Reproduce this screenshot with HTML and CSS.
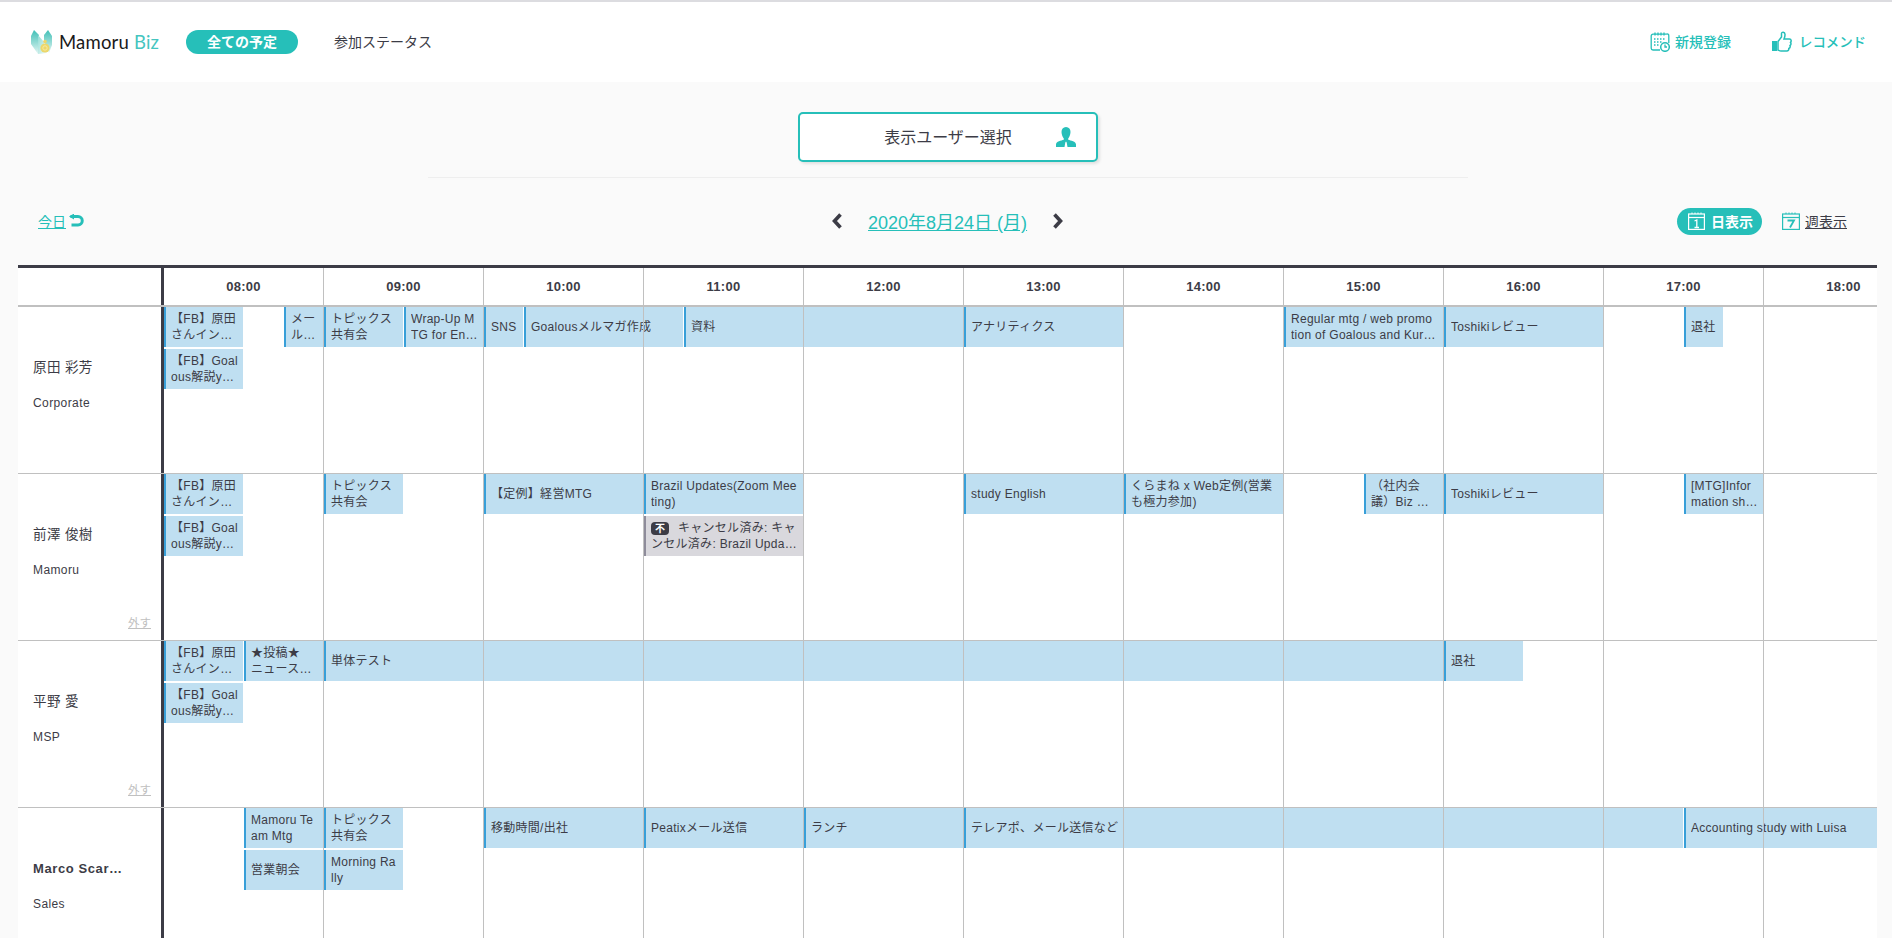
FILE: index.html
```html
<!DOCTYPE html>
<html lang="ja">
<head>
<meta charset="utf-8">
<title>Mamoru Biz</title>
<link rel="stylesheet" href="styles.css">
</head>
<body>
<header class="topbar">
  <div class="brand">
    <svg class="logo" viewBox="0 0 24 26" width="24" height="26">
      <defs>
        <linearGradient id="lg" x1="0" y1="0" x2="0" y2="1"><stop offset="0" stop-color="#3fbfb6"/><stop offset="1" stop-color="#e4f6f3"/></linearGradient>
        <linearGradient id="lh" x1="0" y1="0" x2="1" y2="1"><stop offset="0" stop-color="#8fdcd5"/><stop offset="1" stop-color="#f4fbf9"/></linearGradient>
      </defs>
      <polygon points="4,1 9,6 9,15 8,25 1,15 1,7" fill="url(#lg)"/>
      <polygon points="18,1 22,7 22,16 19,24 14,12 14,6" fill="url(#lg)"/>
      <polygon points="8,6 14,13 17,24 8,25" fill="url(#lh)"/>
      <circle cx="15" cy="19" r="4.6" fill="#ecd76a"/>
      <circle cx="15" cy="19" r="2.200" fill="none" stroke="#f8eeb0" stroke-width=".8"/>
      <circle cx="15" cy="12.500" r="1.800" fill="#ecd76a"/>
    </svg>
    <span class="brand-name">Mamoru <span class="brand-biz">Biz</span></span>
  </div>
  <nav class="nav">
    <a class="nav-pill">全ての予定</a>
    <a class="nav-link">参加ステータス</a>
  </nav>
  <div class="actions">
    <a class="action action-new">
      <svg viewBox="0 0 20 20" width="20" height="20" fill="none" stroke="#26bfb9" stroke-width="1.300">
        <path d="M10 18H3a1.800 1.800 0 0 1-1.800-1.800V4A1.800 1.800 0 0 1 3 2.200h13A1.800 1.800 0 0 1 18.800 4v7"/>
        <path d="M5 .5v3M8 .5v3M11 .5v3M14 .5v3"/>
        <path d="M4 7h1.500M7 7h1.500M10 7h1.500M13 7h1.500M4 10h1.500M7 10h1.500M10 10h1.500M4 13h1.500M7 13h1.500" stroke-width="1.400"/>
        <circle cx="15" cy="15" r="4.300" fill="#fff" stroke-width="1.500"/>
        <path d="M15 12.500V15h2"/>
      </svg>
      <span class="lift">新規登録</span>
    </a>
    <a class="action action-rec">
      <svg viewBox="0 0 20 22" width="20" height="22">
        <rect x="0" y="10" width="5" height="10" fill="#26bfb9"/>
        <path d="M6 10.500 9.500 6V2.500c0-1.800 3.300-1.800 3.500.8.100 1.700-.6 3.700-1 4.700h5.500c2 0 2 2.500 1 3.500.8 1 .6 2.500-.5 3 .4 1.200 0 2.500-1.200 3 .2 1.500-.6 2.500-2 2.500H9c-1.300 0-2-.6-3-1z" fill="none" stroke="#26bfb9" stroke-width="1.500"/>
      </svg>
      <span class="lift">レコメンド</span>
    </a>
  </div>
</header>

<main class="page">
  <section class="picker">
    <button class="picker-btn">
      表示ユーザー選択
      <svg class="picker-icon" viewBox="0 0 20 20" width="20" height="20">
        <path fill="#26bfb9" d="M10 0c3 0 4.500 2.200 4.500 5S13 10.500 12.200 11.500v1.300c2.500.8 7.800 1.700 7.800 4.700V20h-8.500L10.700 15.500 10 14.500 9.300 15.500 8.500 20H0v-2.500c0-3 5.300-3.900 7.800-4.700v-1.300C7 10.500 5.500 7.800 5.500 5S7 0 10 0z"/>
      </svg>
    </button>
  </section>
  <hr class="rule">

  <section class="toolbar">
    <div class="today">
      <a class="today-link">今日</a>
      <svg viewBox="0 0 15 14" width="15" height="14" fill="none" stroke="#26bfb9" stroke-width="3">
        <path d="M1.500 2.500H9a4 4 0 0 1 0 8.500H2.500"/>
        <path d="M0 2.500 5 -.5v6z" fill="#26bfb9" stroke="none"/>
      </svg>
    </div>
    <div class="date-nav">
      <svg viewBox="0 0 10 16" width="10" height="16" fill="none" stroke="#3c3c46" stroke-width="3.600"><path d="M8.500 1.500 2.500 8l6 6.500"/></svg>
      <a class="date">2020年8月24日 (月)</a>
      <svg viewBox="0 0 10 16" width="10" height="16" fill="none" stroke="#3c3c46" stroke-width="3.600"><path d="M1.500 1.500 7.500 8l-6 6.500"/></svg>
    </div>
    <div class="views">
      <a class="view-pill">
        <svg viewBox="0 0 17 18" width="17" height="18" fill="none" stroke="#fff" stroke-width="1.200">
          <rect x=".6" y="2" width="15.800" height="15.400"/><path d="M.6 5.500h15.800"/><path d="M4 .5v1.500M7 .5v1.500M10 .5v1.500M13 .5v1.500" stroke-width="1"/>
          <path d="M6.500 9 8.800 8v7.500M6.500 15.500h4.500" stroke-width="1.300"/>
        </svg>
        日表示
      </a>
      <a class="view-link">
        <svg viewBox="0 0 18 18" width="18" height="18" fill="none" stroke="#26bfb9" stroke-width="1.200">
          <rect x=".6" y="2" width="16.800" height="15.400"/><path d="M.6 5.500h16.800"/><path d="M4 .5v1.500M7 .5v1.500M10 .5v1.500M13 .5v1.500" stroke-width="1"/>
          <path d="M5.500 8.500H12L8 15.500" stroke-width="1.800"/>
        </svg>
        <span class="view-text">週表示</span>
      </a>
    </div>
  </section>

  <section class="schedule">
    <div class="head-row">
      <div class="name-head"></div>
      <div class="hours">
        <div class="hour">08:00</div><div class="hour">09:00</div><div class="hour">10:00</div><div class="hour">11:00</div><div class="hour">12:00</div><div class="hour">13:00</div><div class="hour">14:00</div><div class="hour">15:00</div><div class="hour">16:00</div><div class="hour">17:00</div><div class="hour">18:00</div>
      </div>
    </div>

    <div class="row">
      <div class="person">
        <div class="name">原田 彩芳</div>
        <div class="dept">Corporate</div>
      </div>
      <div class="lanes">
        <div class="ev l1" style="grid-column:1/3"><span class="t">【FB】原田さんインタビュー</span></div>
        <div class="ev l1" style="grid-column:4/5"><span class="t">メール送信作業</span></div>
        <div class="ev l1" style="grid-column:5/7"><span class="t">トピックス共有会</span></div>
        <div class="ev l1" style="grid-column:7/9"><span class="t">Wrap-Up MTG for Engineers</span></div>
        <div class="ev l1" style="grid-column:9/10"><span class="t">SNS</span></div>
        <div class="ev l1" style="grid-column:10/14"><span class="t">Goalousメルマガ作成</span></div>
        <div class="ev l1" style="grid-column:14/21"><span class="t">資料</span></div>
        <div class="ev l1" style="grid-column:21/25"><span class="t">アナリティクス</span></div>
        <div class="ev l1" style="grid-column:29/33"><span class="t">Regular mtg / web promo<br>tion of Goalous and Kuramane</span></div>
        <div class="ev l1" style="grid-column:33/37"><span class="t">Toshikiレビュー</span></div>
        <div class="ev l1" style="grid-column:39/40"><span class="t">退社</span></div>
        <div class="ev l2" style="grid-column:1/3"><span class="t">【FB】Goalous解説yのインタビュー</span></div>
      </div>
    </div>

    <div class="row">
      <div class="person">
        <div class="name">前澤 俊樹</div>
        <div class="dept">Mamoru</div>
        <a class="remove">外す</a>
      </div>
      <div class="lanes">
        <div class="ev l1" style="grid-column:1/3"><span class="t">【FB】原田さんインタビュー</span></div>
        <div class="ev l1" style="grid-column:5/7"><span class="t">トピックス共有会</span></div>
        <div class="ev l1" style="grid-column:9/13"><span class="t">【定例】経営MTG</span></div>
        <div class="ev l1" style="grid-column:13/17"><span class="t">Brazil Updates(Zoom Meeting)</span></div>
        <div class="ev l1" style="grid-column:21/25"><span class="t">study English</span></div>
        <div class="ev l1" style="grid-column:25/29"><span class="t">くらまね x Web定例(営業も極力参加)</span></div>
        <div class="ev l1" style="grid-column:31/33"><span class="t">（社内会議）Biz Meeting</span></div>
        <div class="ev l1" style="grid-column:33/37"><span class="t">Toshikiレビュー</span></div>
        <div class="ev l1" style="grid-column:39/41"><span class="t">[MTG]Information sharing</span></div>
        <div class="ev l2" style="grid-column:1/3"><span class="t">【FB】Goalous解説yのインタビュー</span></div>
        <div class="ev l2 ev-off" style="grid-column:13/17"><span class="t"><b class="badge">不</b>キャンセル済み: キャンセル済み: Brazil Updates(Zoom Meeting)</span></div>
      </div>
    </div>

    <div class="row">
      <div class="person">
        <div class="name">平野 愛</div>
        <div class="dept">MSP</div>
        <a class="remove">外す</a>
      </div>
      <div class="lanes">
        <div class="ev l1" style="grid-column:1/3"><span class="t">【FB】原田さんインタビュー</span></div>
        <div class="ev l1" style="grid-column:3/5"><span class="t">★投稿★<br>ニュース配信作業</span></div>
        <div class="ev l1" style="grid-column:5/33"><span class="t">単体テスト</span></div>
        <div class="ev l1" style="grid-column:33/35"><span class="t">退社</span></div>
        <div class="ev l2" style="grid-column:1/3"><span class="t">【FB】Goalous解説yのインタビュー</span></div>
      </div>
    </div>

    <div class="row">
      <div class="person">
        <div class="name name-strong">Marco Scarpellini</div>
        <div class="dept">Sales</div>
      </div>
      <div class="lanes">
        <div class="ev l1" style="grid-column:3/5"><span class="t">Mamoru Team Mtg</span></div>
        <div class="ev l1" style="grid-column:5/7"><span class="t">トピックス共有会</span></div>
        <div class="ev l1" style="grid-column:9/13"><span class="t">移動時間/出社</span></div>
        <div class="ev l1" style="grid-column:13/17"><span class="t">Peatixメール送信</span></div>
        <div class="ev l1" style="grid-column:17/21"><span class="t">ランチ</span></div>
        <div class="ev l1" style="grid-column:21/39"><span class="t">テレアポ、メール送信など</span></div>
        <div class="ev l1" style="grid-column:39/45"><span class="t">Accounting study with Luisa</span></div>
        <div class="ev l2" style="grid-column:3/5"><span class="t">営業朝会</span></div>
        <div class="ev l2" style="grid-column:5/7"><span class="t">Morning Rally</span></div>
      </div>
    </div>
  </section>
</main>
</body>
</html>
```

FILE: styles.css
```css
* { box-sizing: border-box; }
html, body { margin: 0; height: 938px; overflow: hidden; }
body {
  background: #fafafa;
  color: #3c3c46;
  font-family: "Liberation Sans", "Noto Sans CJK JP", sans-serif;
  font-size: 14px;
}
a { cursor: pointer; }

.topbar {
  height: 82px;
  border-top: 2px solid #dcdce0;
  background: #fff;
  display: flex;
  align-items: center;
  padding: 0 26px 0 30px;
}
.brand { display: flex; align-items: center; gap: 5px; width: 156px; }
.logo { flex: none; }
.brand-name {
  font-family: "Lato", sans-serif;
  font-size: 18.5px;
  color: #1a1a1a;
  white-space: nowrap;
  letter-spacing: .2px;
}
.brand-biz { color: #45c5c0; }
.nav { display: flex; align-items: center; gap: 36px; }
.nav-pill {
  width: 112px;
  height: 24px;
  border-radius: 12px;
  background: #26bfb9;
  color: #fff;
  font-weight: 700;
  font-size: 14px;
  display: flex;
  align-items: center;
  justify-content: center;
  padding-bottom: 2px;
}
.nav-link { font-size: 14px; color: #3c3c46; padding-bottom: 2px; }
.actions { margin-left: auto; display: flex; align-items: center; gap: 41px; }
.action {
  display: flex;
  align-items: center;
  gap: 5px;
  color: #26bfb9;
  font-size: 14px;
  font-weight: 500;
}
.lift { padding-bottom: 2px; }
.action-rec { gap: 7px; font-size: 13.4px; }

.page { display: block; }
.picker { display: flex; justify-content: center; padding: 30px 0 0 4px; }
.picker-btn {
  position: relative;
  width: 300px;
  height: 50px;
  background: #fff;
  border: 2px solid #26bfb9;
  border-radius: 5px;
  box-shadow: 2px 2px 3px rgba(0, 0, 0, .1);
  font: inherit;
  font-size: 16px;
  color: #3c3c46;
  padding: 0 0 3px 0;
}
.picker-icon { position: absolute; right: 20px; top: 13px; }
.rule { width: 1040px; height: 1px; border: 0; background: #eeeeee; margin: 15px 0 0 428px; }

.toolbar {
  height: 87px;
  padding: 29px 45px 0 38px;
  display: grid;
  grid-template-columns: 794px auto 1fr;
  align-items: start;
}
.today { display: flex; align-items: center; gap: 3px; height: 28px; }
.today-link { color: #26bfb9; text-decoration: underline; font-size: 14px; }
.date-nav { display: flex; align-items: center; gap: 26px; height: 28px; }
.date { color: #26bfb9; text-decoration: underline; font-size: 18px; }
.views { display: flex; justify-content: flex-end; align-items: center; gap: 20px; height: 28px; }
.view-pill {
  width: 85px;
  height: 27px;
  border-radius: 14px;
  background: #26bfb9;
  color: #fff;
  font-weight: 700;
  display: flex;
  align-items: center;
  gap: 6px;
  padding-left: 11px;
}
.view-link { display: flex; align-items: center; gap: 5px; }
.view-text { text-decoration: underline; }

.schedule {
  margin-left: 18px;
  width: 1859px;
  background: #fff;
  border-top: 3px solid #3c3c46;
  overflow: hidden;
}
.head-row { display: flex; height: 39px; border-bottom: 2px solid #c0c0c0; }
.name-head { width: 143px; flex: none; }
.hours {
  display: flex;
  flex: none;
  border-left: 3px solid #3c3c46;
}
.hour {
  width: 160px;
  flex: none;
  border-right: 1px solid #c0c0c0;
  display: flex;
  align-items: center;
  justify-content: center;
  font-size: 13px;
  font-weight: 700;
  letter-spacing: .3px;
}
.row { display: flex; height: 167px; border-bottom: 1px solid #c0c0c0; }
.person {
  width: 143px;
  flex: none;
  display: flex;
  flex-direction: column;
  padding: 51px 10px 0 15px;
}
.name {
  font-size: 13.5px;
  line-height: 20px;
  white-space: nowrap;
  overflow: hidden;
  text-overflow: ellipsis;
  letter-spacing: .4px;
  max-width: 92px;
}
.name-strong { font-weight: 700; font-size: 13px; letter-spacing: .6px; }
.dept { font-size: 12px; line-height: 16px; margin-top: 17px; letter-spacing: .4px; }
.remove {
  margin-top: 37px;
  align-self: flex-end;
  font-size: 11.5px;
  line-height: 16px;
  color: #c0c0c0;
  text-decoration: underline;
}
.lanes {
  position: relative;
  flex: none;
  width: 1763px;
  border-left: 3px solid #3c3c46;
  display: grid;
  grid-template-columns: repeat(44, 40px);
  grid-auto-rows: 40px;
  row-gap: 2px;
  align-content: start;
}
.lanes::after {
  content: "";
  position: absolute;
  inset: 0;
  background: repeating-linear-gradient(to right, transparent 0, transparent 159px, #c0c0c0 159px, #c0c0c0 160px);
  pointer-events: none;
}
.l1 { grid-row: 1; }
.l2 { grid-row: 2; }
.ev {
  display: flex;
  align-items: center;
  min-width: 0;
  margin-right: 1px;
  padding: 0 5px;
  background: #bfdff1;
  border-left: 2px solid #389fd8;
  font-size: 12px;
  line-height: 16px;
  letter-spacing: .28px;
  color: #3c3c46;
}
.t {
  display: -webkit-box;
  -webkit-box-orient: vertical;
  -webkit-line-clamp: 2;
  overflow: hidden;
  word-break: break-all;
}
.ev-off { background: #d9d8dd; border-left-color: #8e8c9a; }
.badge {
  display: inline-block;
  width: 18px;
  height: 13px;
  margin-right: 9px;
  border-radius: 4px;
  background: #3c3c46;
  color: #fff;
  font-size: 10px;
  font-weight: 700;
  line-height: 13px;
  text-align: center;
  letter-spacing: 0;
}
```
